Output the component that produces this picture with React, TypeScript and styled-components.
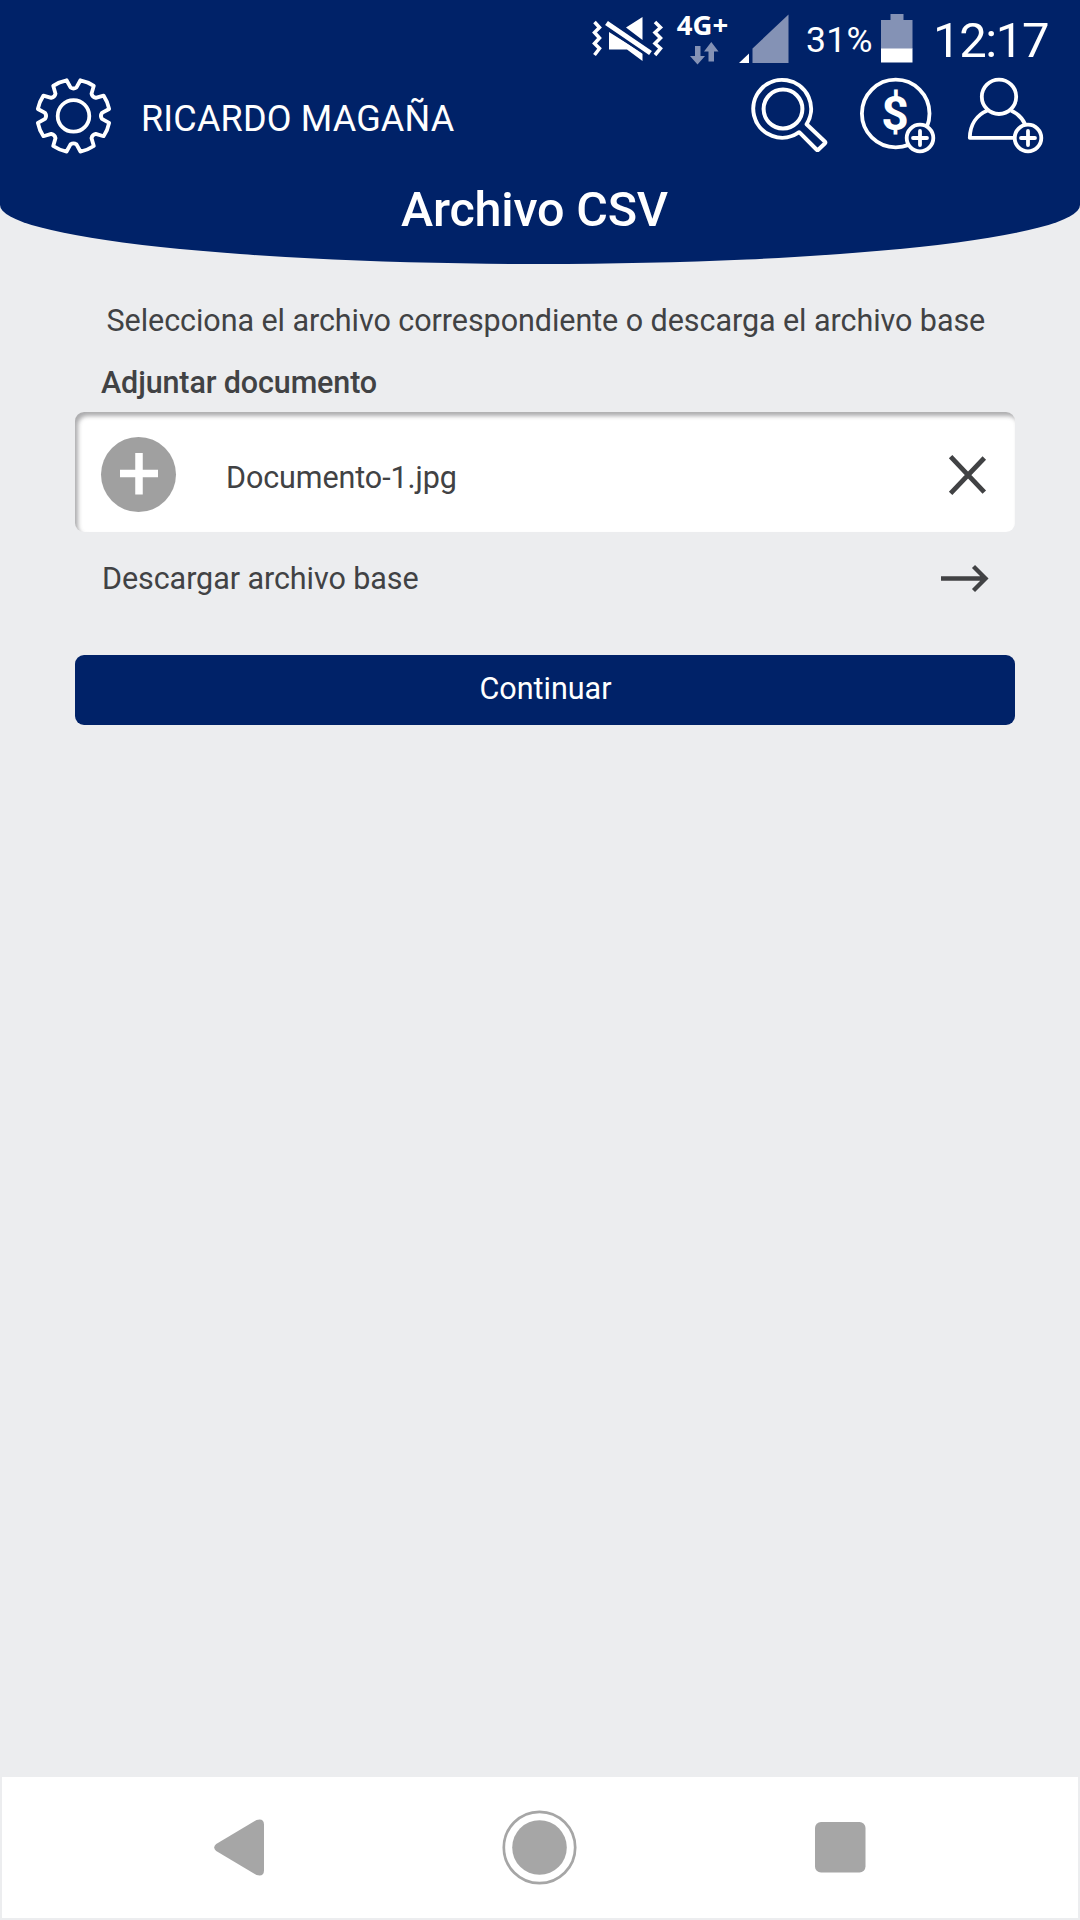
import React from "react";
import styled, { createGlobalStyle } from "styled-components";

const navy = "#002268";
const paper = "#ecedef";
const ink = "#414244";
const grey = "#a6a6a6";

const GlobalStyle = createGlobalStyle`
  *, *::before, *::after { box-sizing: border-box; }
  html, body { margin: 0; padding: 0; background: ${paper}; }
  button { font: inherit; border: 0; padding: 0; background: none; color: inherit; }
  svg { display: block; flex: none; overflow: visible; }
`;

const Screen = styled.div`
  width: 1080px;
  height: 1920px;
  display: flex;
  flex-direction: column;
  overflow: hidden;
  background: ${paper};
  color: ${ink};
  font-family: Roboto, "Liberation Sans", sans-serif;
`;

const Header = styled.header`
  height: 264px;
  flex: none;
  background: ${navy};
  color: #fff;
  border-radius: 0 0 50% 50% / 0 0 59px 59px;
`;

const StatusBar = styled.div`
  height: 78px;
  display: flex;
  align-items: flex-start;
  padding: 14px 0 0 592px;
`;

const Network = styled.div`
  width: 53px;
  margin: -1px 10px 0 14px;
  display: flex;
  flex-direction: column;
  align-items: center;
  gap: 5px;
`;

const NetworkType = styled.span`
  font: 700 27.5px/24px "Open Sans", sans-serif;
  white-space: nowrap;
`;

const Percent = styled.span`
  width: 75px;
  margin-left: 17px;
  font-size: 35.5px;
  line-height: 53px;
  letter-spacing: 0.3px;
  white-space: nowrap;
`;

const Clock = styled.time`
  margin-left: 20px;
  font-size: 49px;
  line-height: 54px;
  letter-spacing: -1.4px;
  white-space: nowrap;
`;

const Toolbar = styled.div`
  height: 76px;
  display: flex;
  align-items: flex-start;
  padding: 0 36px;
`;

const UserName = styled.span`
  flex: 1;
  padding-left: 29px;
  font-size: 36px;
  line-height: 83px;
  white-space: nowrap;
  letter-spacing: 0.17px;
`;

const Actions = styled.div`
  display: flex;
  gap: 32px;
`;

const IconButton = styled.button`
  display: block;
  width: 76px;
  height: 76px;
`;

const Title = styled.h1`
  margin: 0;
  padding-right: 11px;
  font-size: 48.5px;
  font-weight: 500;
  line-height: 112px;
  letter-spacing: -0.2px;
  text-align: center;
`;

const Content = styled.main`
  flex: 1;
  padding: 0 65px 0 75px;
  font-size: 30.5px;
  white-space: nowrap;
`;

const Intro = styled.p`
  margin: 0;
  height: 93px;
  padding: 37px 0 0 31.5px;
  line-height: 40px;
  letter-spacing: -0.06px;
`;

const Label = styled.label`
  display: block;
  height: 55px;
  padding: 6px 0 0 26px;
  font-weight: 500;
  line-height: 40px;
  letter-spacing: -0.13px;
`;

const FileField = styled.div`
  height: 120px;
  display: flex;
  align-items: center;
  padding: 5px 29px 0 26px;
  border-radius: 9px;
  background: #fff;
  box-shadow: inset 3px 4px 4px rgba(70, 72, 76, 0.45);
`;

const FileName = styled.span`
  flex: 1;
  padding-left: 50px;
  padding-top: 7px;
  line-height: 40px;
  letter-spacing: -0.1px;
`;

const DownloadRow = styled.div`
  height: 123px;
  display: flex;
  align-items: flex-start;
  justify-content: space-between;
  padding: 27px 27px 0 27px;
  line-height: 40px;
  letter-spacing: -0.07px;
`;

const ContinueButton = styled.button`
  display: block;
  width: 100%;
  height: 70px;
  padding: 0 0 2px 1px;
  border-radius: 9px;
  background: ${navy};
  color: #fff;
  line-height: 64px;
`;

const NavBar = styled.nav`
  height: 141px;
  flex: none;
  margin: 0 2px 2px;
  display: flex;
  align-items: center;
  justify-content: space-between;
  padding: 0 212px 0 212px;
  background: #fff;
`;

const polar = (r: number, deg: number) => {
  const a = (deg * Math.PI) / 180;
  return `${(37.5 + r * Math.sin(a)).toFixed(2)} ${(36.9 - r * Math.cos(a)).toFixed(2)}`;
};

const gearPath =
  Array.from({ length: 8 }, (_, i) => {
    const d = i * 45;
    return `${i ? "L" : "M"}${polar(36.3, d - 11)}L${polar(28.6, d - 6)}Q${polar(26.4, d)} ${polar(28.6, d + 6)}L${polar(36.3, d + 11)}A36 36 0 0 1 ${polar(36.3, d + 34)}`;
  }).join("") + "Z";

const Gear = () => (
  <svg width="75" height="75" viewBox="0 0 75 75" fill="none" stroke="#fff" strokeWidth="3.8" strokeLinejoin="round">
    <path d={gearPath} />
    <circle cx="37.5" cy="36.9" r="15.8" />
  </svg>
);

const PlusBadge = ({ x, y }: { x: number; y: number }) => (
  <g>
    <circle cx={x} cy={y} r="13.3" fill={navy} />
    <path d={`M${x - 7} ${y}h14M${x} ${y - 7}v14`} strokeLinecap="round" />
  </g>
);

const Search = () => (
  <svg width="76" height="76" viewBox="0 0 76 76" fill="none" stroke="#fff" strokeWidth="4" strokeLinejoin="round">
    <path d="M54.6 46.3A28.900 28.900 0 1 0 47.200 54.2L64.500 71.500Q65.500 72.500 66.500 71.500L72.800 65.500Q73.800 64.500 72.800 63.500Z" />
    <circle cx="31" cy="31" r="19.400" />
  </svg>
);

const Dollar = () => (
  <svg width="76" height="76" viewBox="0 0 76 76" fill="none" stroke="#fff" strokeWidth="3.8">
    <circle cx="35.7" cy="35.5" r="33.8" />
    <text x="35" y="52" textAnchor="middle" fontSize="48" fontWeight="700" fill="#fff" stroke="none">$</text>
    <PlusBadge x={60} y={60} />
  </svg>
);

const AddUser = () => (
  <svg width="76" height="76" viewBox="0 0 76 76" fill="none" stroke="#fff" strokeWidth="3.8" strokeLinejoin="round">
    <circle cx="31" cy="18.8" r="17.2" />
    <path d="M19.5 32.5C8.5 37 2 47 1.8 59.8H46M43 32.5C49.500 35.500 54.500 40 57.500 47" />
    <PlusBadge x={60} y={60} />
  </svg>
);

const Muted = () => (
  <svg width="70" height="48" viewBox="0 0 70 48">
    <g fill="none" stroke="#fff" strokeWidth="3.500">
      <path d="M2.500 8L7.500 13.500L2.500 18.500L7.500 24L2.500 29.500L7.500 34.500L2.500 41" />
      <path d="M63 8L68.500 13.500L63 18.500L68.500 24L63 29.500L68.500 34.500L63 41" />
    </g>
    <path d="M17 18L50.500 39V47L35 35.500H17ZM34 13.500L50.500 3V26Z" fill="#fff" />
    <path d="M14.500 9L58.500 39" stroke={navy} strokeWidth="10" />
    <path d="M14.500 9L58.500 39" stroke="#fff" strokeWidth="5" />
  </svg>
);

const DataArrows = () => (
  <svg width="29" height="23" viewBox="-2 0 29 23" fill="#8492b5">
    <path d="M5 4h5.500v10h4.500L7.500 22.500L0 14h5ZM18.500 19.500V9.500H14L21.300 0L28.500 9.500H24V19.500Z" />
  </svg>
);

const Signal = () => (
  <svg width="50" height="49" viewBox="0 0 50 49">
    <path d="M0 49L10 39.500V49Z" fill="#fff" />
    <path d="M13.500 49V34.500L49.500 .5V49Z" fill="#8492b5" />
  </svg>
);

const Battery = () => (
  <svg width="32" height="49" viewBox="0 0 32 49">
    <path d="M0 6H9.500V0H22.500V6H31.500V35H0Z" fill="#8492b5" />
    <path d="M0 34.500H31.500V48.500H0Z" fill="#fff" />
  </svg>
);

const AddFile = () => (
  <svg width="75" height="75" viewBox="0 0 75 75">
    <circle cx="37.5" cy="37.5" r="37.500" fill="#a0a0a0" />
    <path d="M19 36.500H57M38 16V57.500" stroke="#fff" strokeWidth="7.500" />
  </svg>
);

const Close = () => (
  <svg width="37" height="40" viewBox="0 0 37 40" fill="none" stroke={ink} strokeWidth="4.800">
    <path d="M1.600 1.700L35.300 37.200M35.300 3L1.600 38.300" />
  </svg>
);

const Arrow = () => (
  <svg width="47" height="40" viewBox="0 0 47 40" fill="none" stroke={ink} strokeWidth="4.300">
    <path d="M0 19.500H44M32.500 7.500L44.500 19.500L32.500 31.500" />
  </svg>
);

const Back = () => (
  <svg width="50" height="57" viewBox="0 0 50 57" fill={grey}>
    <path d="M2.200 25L42.500 .9Q49.800 -1.200 50 5.500V51.500Q49.800 58 42.500 56L2.200 32Q-1.800 28.500 2.200 25Z" />
  </svg>
);

const Home = () => (
  <svg width="75" height="75" viewBox="0 0 75 75">
    <circle cx="37.500" cy="37.500" r="35.700" fill="none" stroke={grey} strokeWidth="2.700" />
    <circle cx="37.500" cy="37.500" r="27.300" fill={grey} />
  </svg>
);

const Recent = () => (
  <svg width="51" height="51" viewBox="0 0 51 51">
    <rect width="50.500" height="50.500" rx="6" fill={grey} />
  </svg>
);

export default function App() {
  return (
    <Screen>
      <GlobalStyle />
      <Header>
        <StatusBar>
          <Muted />
          <Network>
            <NetworkType>4G+</NetworkType>
            <DataArrows />
          </Network>
          <Signal />
          <Percent>31%</Percent>
          <Battery />
          <Clock>12:17</Clock>
        </StatusBar>
        <Toolbar>
          <IconButton aria-label="Ajustes"><Gear /></IconButton>
          <UserName>RICARDO MAGAÑA</UserName>
          <Actions>
            <IconButton aria-label="Buscar"><Search /></IconButton>
            <IconButton aria-label="Agregar pago"><Dollar /></IconButton>
            <IconButton aria-label="Agregar usuario"><AddUser /></IconButton>
          </Actions>
        </Toolbar>
        <Title>Archivo CSV</Title>
      </Header>
      <Content>
        <Intro>Selecciona el archivo correspondiente o descarga el archivo base</Intro>
        <Label>Adjuntar documento</Label>
        <FileField>
          <AddFile />
          <FileName>Documento-1.jpg</FileName>
          <Close />
        </FileField>
        <DownloadRow>
          <span>Descargar archivo base</span>
          <Arrow />
        </DownloadRow>
        <ContinueButton>Continuar</ContinueButton>
      </Content>
      <NavBar>
        <Back />
        <Home />
        <Recent />
      </NavBar>
    </Screen>
  );
}
